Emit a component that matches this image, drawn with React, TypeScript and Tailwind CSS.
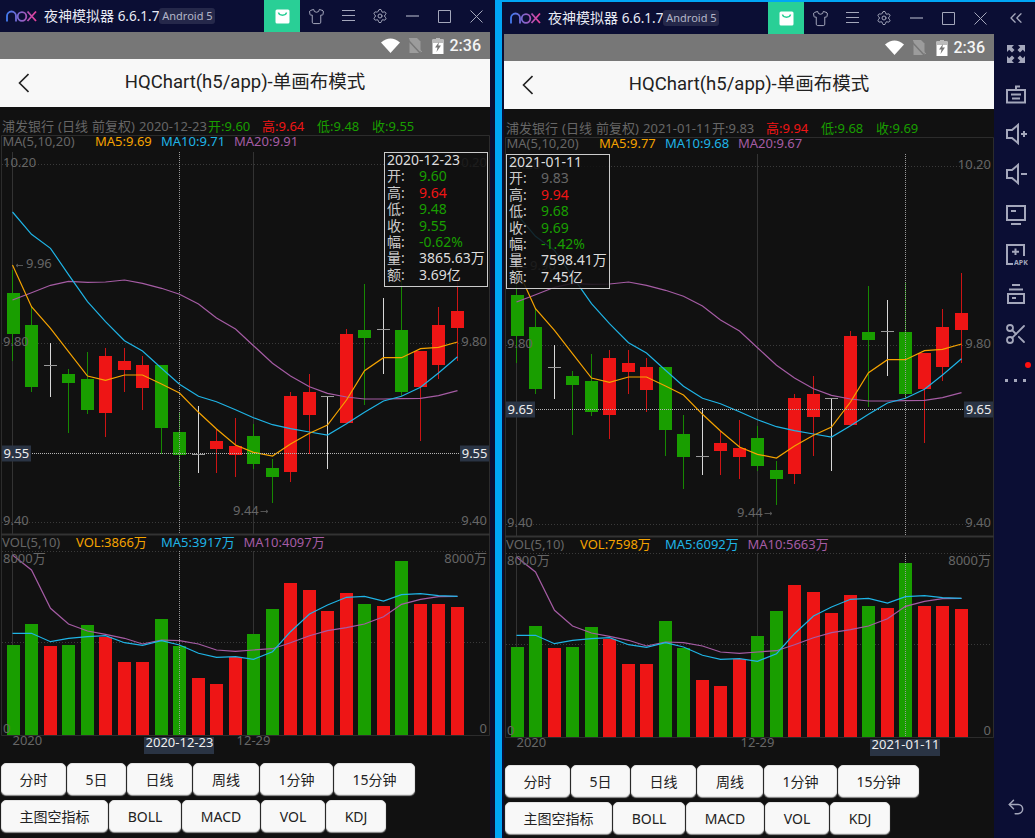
import { ChevronsLeft, Scissors, Settings, Shirt, Undo2 } from "lucide-react";

// all chart numbers below were read off the 3x crops: y = 280 + v / 3
const lefts = [7, 25, 44, 62, 81, 99, 118, 136, 155, 173, 192, 210, 229, 247, 266, 284, 303, 321, 340, 358, 377, 395, 414, 432, 451];
const RED = "#ee1515";
const GREEN = "#199e00";
const LABEL = "#666666";

// [type, wick top, body top, body bottom, wick bottom]
const candles: [string, number, number, number, number][] = [
  ["g", -30, 40, 162, 243],
  ["g", 80, 135, 322, 335],
  ["w", 190, 255, 255, 350],
  ["g", 267, 282, 308, 458],
  ["g", 216, 297, 389, 402],
  ["r", 203, 228, 400, 470],
  ["r", 203, 243, 269, 335],
  ["r", 228, 256, 325, 389],
  ["g", 256, 256, 443, 522],
  ["g", 398, 456, 525, 622],
  ["w", 377, 522, 522, 578],
  ["r", 448, 483, 508, 578],
  ["r", 415, 499, 525, 590],
  ["g", 432, 468, 551, 566],
  ["g", 537, 564, 590, 670],
  ["r", 337, 348, 577, 605],
  ["r", 282, 336, 404, 522],
  ["w", 349, 349, 349, 566],
  ["r", 148, 162, 429, 429],
  ["g", 12, 149, 174, 375],
  ["w", 55, 146, 146, 282],
  ["g", 0, 149, 335, 348],
  ["r", 213, 213, 321, 483],
  ["r", 82, 135, 256, 296],
  ["r", -27, 93, 145, 242],
];

const ma5 = [-45, 80, 145, 215, 288, 301, 285, 285, 312, 339, 397, 447, 495, 517, 528, 492, 460, 435, 360, 272, 233, 233, 206, 202, 186];
const ma10 = [-204, -137, -95, -16, 65, 125, 182, 213, 265, 313, 349, 365, 389, 413, 434, 446, 456, 465, 431, 397, 363, 349, 322, 279, 230];
const ma20 = [60, 38, 16, 4, 7, 6, 0, 10, 25, 43, 72, 114, 147, 197, 250, 288, 320, 340, 351, 357, 357, 356, 355, 347, 332];

// volume panel: y = 550 + v / 3
const volumes: [string, number][] = [
  ["g", 284], ["g", 222], ["r", 287], ["g", 284], ["g", 225], ["r", 260], ["r", 336], ["r", 336], ["g", 208], ["g", 287],
  ["r", 384], ["r", 402], ["r", 322], ["g", 251], ["g", 176], ["r", 100], ["r", 120], ["r", 183], ["r", 129], ["g", 162],
  ["r", 169], ["g", 33], ["r", 162], ["r", 162], ["r", 172],
];
const volMa5 = [250, 250, 275, 265, 260, 257, 278, 286, 272, 285, 310, 322, 320, 328, 305, 245, 192, 165, 142, 139, 153, 134, 131, 137, 139];
const volMa10 = [15, 60, 175, 222, 243, 253, 265, 282, 270, 272, 282, 300, 304, 300, 296, 278, 257, 242, 233, 222, 200, 163, 148, 140, 139];

const line = (vals: number[], base: number) =>
  vals.map((v, i) => `${i === 0 ? 12.5 : lefts[i] + 6.5},${(base + v / 3).toFixed(1)}`).join(" ");

const candleColor = (t: string) => (t === "r" ? RED : t === "g" ? GREEN : "#d8d8d8");

type ChartProps = {
  crossX: number;
  crossY: number;
  price: string;
  date: string;
  vol: string;
  volMa5Text: string;
  volMa10Text: string;
  ma: string[];
};

const Chart = ({ crossX, crossY, price, date, vol, volMa5Text, volMa10Text, ma }: ChartProps) => (
  <svg className="block h-[625px] w-[490px]" viewBox="0 135 490 625" fontSize="13">
    {/* frame and grid */}
    <path d="M1.5 135.5H489.5V735.5H1.5Z" fill="none" stroke="#2c2c2c" />
    <path d="M1 534.5H490" stroke="#333" strokeWidth="2" />
    <path d="M12.5 152V534M253.5 152V534M12.5 551V735M253.5 551V735" stroke="#333" />
    <path d="M2 164.500H488M2 343.500H488M2 522.500H488M2 551.500H488M2 642.500H488" stroke="#3a3a3a" strokeDasharray="1 2" />

    {candles.map(([t, wt, bt, bb, wb], i) => {
      const color = candleColor(t);
      const top = Math.round(280 + bt / 3);
      const bottom = Math.round(280 + bb / 3);
      const wx = i === 0 ? 12 : lefts[i] + 6;
      return (
        <g key={i} shapeRendering="crispEdges">
          <rect x={wx} y={280 + wt / 3} width="1" height={(wb - wt) / 3} fill={color} opacity={t === "w" ? 1 : 0.85} />
          {t === "w" ? (
            <rect x={lefts[i]} y={top} width="13" height="1" fill="#9a9a9a" />
          ) : (
            <rect x={lefts[i]} y={top} width="13" height={bottom - top} fill={color} />
          )}
        </g>
      );
    })}

    {volumes.map(([t, top], i) => (
      <rect key={i} x={lefts[i]} y={Math.round(550 + top / 3)} width="13" height={735 - Math.round(550 + top / 3)} fill={t === "r" ? RED : GREEN} shapeRendering="crispEdges" />
    ))}

    <polyline points={line(ma20, 280)} fill="none" stroke="#a55ca4" strokeWidth="1.2" />
    <polyline points={line(ma10, 280)} fill="none" stroke="#1fb4e6" strokeWidth="1.2" />
    <polyline points={line(ma5, 280)} fill="none" stroke="#f5a300" strokeWidth="1.2" />
    <polyline points={line(volMa10, 550)} fill="none" stroke="#a55ca4" strokeWidth="1.2" />
    <polyline points={line(volMa5, 550)} fill="none" stroke="#1fb4e6" strokeWidth="1.2" />

    {/* legends */}
    <text x="2.5" y="146" fill={LABEL}>MA(5,10,20)</text>
    <text x="95" y="146" fill="#f5a300">{ma[0]}</text>
    <text x="161" y="146" fill="#1fb4e6">{ma[1]}</text>
    <text x="234" y="146" fill="#a55ca4">{ma[2]}</text>
    <text x="2" y="547" fill={LABEL}>VOL(5,10)</text>
    <text x="76" y="547" fill="#f5a300">{vol}</text>
    <text x="161" y="547" fill="#1fb4e6">{volMa5Text}</text>
    <text x="243.500" y="547" fill="#a55ca4">{volMa10Text}</text>

    {/* axis labels */}
    <g fill={LABEL}>
      <text x="3" y="167">10.20</text>
      <text x="3" y="346">9.80</text>
      <text x="3" y="525">9.40</text>
      <text x="3" y="563">8000万</text>
      <text x="3" y="733">0</text>
      <g textAnchor="end">
        <text x="487" y="167">10.20</text>
        <text x="487" y="346">9.80</text>
        <text x="487" y="525">9.40</text>
        <text x="487" y="563">8000万</text>
        <text x="487" y="733">0</text>
      </g>
      <text x="12.500" y="745">2020</text>
      <text x="253.500" y="745" textAnchor="middle">12-29</text>
      <text x="26" y="268">9.96</text>
      <text x="233" y="515">9.44</text>
      <path d="M16 265.500H23M16 265.500 18 264M16 265.500 18 267M260.500 511.500H268M268 511.500 266 510M268 511.500 266 513" stroke="#555555" fill="none" />
    </g>

    {/* crosshair */}
    <path d={`M${crossX} 152V534M${crossX} 551V735`} stroke="#9a9a9a" strokeDasharray="1 1" />
    <path d={`M2 ${crossY}H488`} stroke="#b5b5b5" strokeDasharray="1 1" />
    <rect x="2" y={crossY - 8} width="29" height="16" fill="#2a3444" />
    <rect x="460" y={crossY - 8} width="29" height="16" fill="#2a3444" />
    <text x="3.500" y={crossY + 4.5} fill="#eeeeee">{price}</text>
    <text x="487.500" y={crossY + 4.5} fill="#eeeeee" textAnchor="end">{price}</text>
    <rect x={crossX - 35.5} y="737" width="70" height="17" fill="#2a3444" />
    <text x={crossX} y="747" fill="#eeeeee" textAnchor="middle">{date}</text>
  </svg>
);

type Row = { label: string; value: string; color: string };

const Tooltip = ({ date, rows, place }: { date: string; rows: Row[]; place: string }) => (
  <div className={`absolute h-[135px] w-[104px] border border-[#cccccc] bg-[#111111]/85 pl-[2px] text-[14px] leading-[16.4px] text-[#dddddd] ${place}`}>
    <div className="-mt-px">{date}</div>
    {rows.map((r) => (
      <div key={r.label} className="grid grid-cols-[32px_1fr]">
        <span className="text-[#cccccc]">{r.label}</span>
        <span className={r.color}>{r.value}</span>
      </div>
    ))}
  </div>
);

const row1 = [
  { label: "分时", w: "w-[65px]" },
  { label: "5日", w: "w-[59px]" },
  { label: "日线", w: "w-[65px]" },
  { label: "周线", w: "w-[66px]" },
  { label: "1分钟", w: "w-[73px]" },
  { label: "15分钟", w: "w-[81px]" },
];
const row2 = [
  { label: "主图空指标", w: "w-[107px]" },
  { label: "BOLL", w: "w-[72px]" },
  { label: "MACD", w: "w-[78px]" },
  { label: "VOL", w: "w-[64px]" },
  { label: "KDJ", w: "w-[60px]" },
];

const ButtonRow = ({ items }: { items: { label: string; w: string }[] }) => (
  <div className="flex gap-px">
    {items.map((b) => (
      <button
        key={b.label}
        className={`h-[32px] rounded-[5px] border border-[#e4e4e4] bg-[#f8f8f8] text-[14px] text-[#222222] shadow-[0_1px_1px_#999999] ${b.w}`}
      >
        {b.label}
      </button>
    ))}
  </div>
);

const TitleBar = () => (
  <div className="flex h-8 w-[490px] shrink-0 items-center bg-[#0b0e34]">
    <div className="flex w-[264px] shrink-0 items-center">
      <svg className="ml-[6px] shrink-0" width="31" height="12" viewBox="0 0 31 12" fill="none" strokeWidth="1.8">
        <defs>
          <linearGradient id="noxLogo" x1="0" x2="31" y1="0" y2="0" gradientUnits="userSpaceOnUse">
            <stop offset="0" stopColor="#3d7bf0" />
            <stop offset="0.5" stopColor="#8b62c8" />
            <stop offset="1" stopColor="#ee3d96" />
          </linearGradient>
        </defs>
        <path d="M1 11.500V6a4.500 4.500 0 0 1 9 0v5.500" stroke="url(#noxLogo)" />
        <circle cx="16" cy="6.500" r="4.300" stroke="url(#noxLogo)" />
        <path d="M21.500 1.500 30 11M30 1.500 21.500 11" stroke="url(#noxLogo)" />
      </svg>
      <span className="ml-[7px] whitespace-nowrap text-[14px] text-[#e8eaf4]">
        夜神模拟器 <span className="text-[13.5px]">6.6.1.7</span>
      </span>
      <span className="w-[56px] whitespace-nowrap rounded-[3px] bg-[#25284a] py-px text-center text-[11px] leading-[14px] text-[#b4b6c8]">Android 5</span>
    </div>
    <div className="flex h-8 w-9 shrink-0 items-center justify-center bg-[#29cf96]">
      <svg width="15" height="15" viewBox="0 0 15 15">
        <rect x="0.5" y="0.5" width="14" height="14" rx="1.500" fill="#ffffff" />
        <path d="M3.500 3.500c.6 3.600 7.400 3.600 8 0" fill="none" stroke="#29cf96" strokeWidth="1.500" />
      </svg>
    </div>
    <div className="flex h-8 w-8 shrink-0 items-center justify-center text-[#a4a7bb]">
      <Shirt size={17} strokeWidth={1.4} />
    </div>
    <div className="flex h-8 w-8 shrink-0 items-center justify-center text-[#a4a7bb]">
      <svg width="13" height="12" viewBox="0 0 13 12" stroke="currentColor"><path d="M0 .5H13M0 5.500H13M0 10.500H13" /></svg>
    </div>
    <div className="flex h-8 w-8 shrink-0 items-center justify-center text-[#a4a7bb]">
      <Settings size={16} strokeWidth={1.5} />
    </div>
    <div className="flex h-8 w-8 shrink-0 items-center justify-center text-[#a4a7bb]">
      <svg width="13" height="2" viewBox="0 0 13 2" stroke="currentColor"><path d="M0 1H13" strokeWidth="1.200" /></svg>
    </div>
    <div className="flex h-8 w-8 shrink-0 items-center justify-center text-[#a4a7bb]">
      <svg width="13" height="13" viewBox="0 0 13 13" fill="none" stroke="currentColor"><path d="M.5.5H12.500V12.500H.5Z" /></svg>
    </div>
    <div className="flex h-8 w-8 shrink-0 items-center justify-center text-[#a4a7bb]">
      <svg width="13" height="13" viewBox="0 0 13 13" fill="none" stroke="currentColor"><path d="M.5.5 12.500 12.500M12.500.5 .5 12.500" /></svg>
    </div>
  </div>
);

const StatusBar = () => (
  <div className="flex h-[27px] shrink-0 items-center justify-end bg-[#777777]">
    <svg className="mr-[8px]" width="19" height="15" viewBox="0 0 19 15"><path d="M0 4.500Q9.500-3.500 19 4.500L9.500 15Z" fill="#ffffff" /></svg>
    <svg className="mr-[10px]" width="14" height="16" viewBox="0 0 14 16">
      <path d="M1.500 0H9L12.500 3.500V15H1.500Z" fill="#9c9c9c" />
      <path d="M0 2 13 16" stroke="#777777" strokeWidth="1.500" />
      <path d="M1 0 14 14" stroke="#9c9c9c" />
    </svg>
    <svg className="mr-[6px]" width="12" height="16" viewBox="0 0 12 16">
      <path d="M4 0H8V1.500H11.500V16H.5V1.500H4Z" fill="#ffffff" />
      <path d="M4 0H8V1.500H11.500V5H.5V1.500H4Z" fill="#bbbbbb" />
      <path d="M7 4 3 9.500H5.500L4.500 14 9 7.500H6.300Z" fill="#777777" />
    </svg>
    <span className="mr-[9px] font-['Roboto','Noto_Sans',sans-serif] text-[16px] font-medium text-[#f4f4f4]">2:36</span>
  </div>
);

const AppHeader = () => (
  <div className="flex h-[48px] shrink-0 items-center bg-[#f8f8f8]">
    <div className="flex w-[60px] justify-start pl-[18px]">
      <svg width="11" height="20" viewBox="0 0 11 20" fill="none" stroke="#222222" strokeWidth="1.600"><path d="M10.500 1 1.500 10 10.500 19" /></svg>
    </div>
    <div className="flex-1 text-center font-['Roboto','Noto_Sans_CJK_SC',sans-serif] text-[18.5px] text-[#222222]">HQChart(h5/app)-单画布模式</div>
    <div className="w-[60px]" />
  </div>
);

type WindowProps = ChartProps & {
  open: string;
  openColor: string;
  high: string;
  low: string;
  close: string;
  tooltipPlace: string;
  rows: Row[];
};

const EmulatorWindow = ({ open, openColor, high, low, close, tooltipPlace, rows, ...chart }: WindowProps) => (
  <div className="flex w-[490px] shrink-0 flex-col">
    <TitleBar />
    <StatusBar />
    <AppHeader />
    <div className="flex-1 bg-[#111111]">
      <div className="flex h-[28px] items-end pl-[2px] text-[13px] leading-[18px]">
        <span className="w-[206px] whitespace-nowrap text-[#666666] [word-spacing:0.7px]">浦发银行 (日线 前复权) {chart.date}</span>
        <span className={`w-[54px] ${openColor}`}>{open}</span>
        <span className="w-[55px] text-[#ee1515]">{high}</span>
        <span className="w-[55px] text-[#199e00]">{low}</span>
        <span className="text-[#199e00]">{close}</span>
      </div>
      <div className="relative">
        <Chart {...chart} />
        <Tooltip date={chart.date} rows={rows} place={tooltipPlace} />
      </div>
      <div className="mt-[3px] flex flex-col gap-[5px] pl-px">
        <ButtonRow items={row1} />
        <ButtonRow items={row2} />
      </div>
    </div>
  </div>
);

const SideBar = () => (
  <div className="flex w-[41px] shrink-0 flex-col items-center text-[#a4a7bb]">
    <div className="flex h-8 items-center pl-[3px]">
      <ChevronsLeft size={20} strokeWidth={1.6} />
    </div>
    <div className="mt-[8px] flex flex-col items-center gap-[16px] pl-[3px]">
      {/* expand */}
      <svg width="24" height="24" viewBox="0 0 24 24" fill="currentColor">
        <path d="M3 3H10L7.800 5.200 10.500 8 8 10.500 5.200 7.800 3 10ZM21 3H14L16.200 5.200 13.500 8 16 10.500 18.800 7.800 21 10ZM3 21H10L7.800 18.800 10.500 16 8 13.500 5.200 16.200 3 14ZM21 21H14L16.200 18.800 13.500 16 16 13.500 18.800 16.200 21 14Z" />
      </svg>
      {/* keyboard */}
      <svg width="24" height="24" viewBox="0 0 24 24" fill="none" stroke="currentColor" strokeWidth="2">
        <path d="M3 8H21V20.500H3ZM12 8V4.500H16M7 12.500H17M8 16.500H16" />
      </svg>
      {/* volume up */}
      <svg width="24" height="24" viewBox="0 0 24 24" fill="none" stroke="currentColor" strokeWidth="2">
        <path d="M3 8H8L14 3V21L8 16H3ZM17 12H23M20 9V15" />
      </svg>
      {/* volume down */}
      <svg width="24" height="24" viewBox="0 0 24 24" fill="none" stroke="currentColor" strokeWidth="2">
        <path d="M3 8H8L14 3V21L8 16H3ZM17 12H23" />
      </svg>
      {/* screen */}
      <svg width="24" height="24" viewBox="0 0 24 24" fill="none" stroke="currentColor" strokeWidth="2">
        <path d="M3 4H21V18H3ZM7 22H17M7 9H12" />
      </svg>
      {/* apk */}
      <svg width="24" height="24" viewBox="0 0 24 24" fill="none" stroke="currentColor" strokeWidth="2">
        <path d="M20 14V3H3V22H9M11.500 6.500V13M8 9.700H15" />
        <text x="10" y="23" fill="currentColor" stroke="none" fontSize="7" fontWeight="700">APK</text>
      </svg>
      {/* multi window */}
      <svg width="24" height="24" viewBox="0 0 24 24" fill="none" stroke="currentColor" strokeWidth="2">
        <path d="M8 3H16M5 7.500H19M4 12H20V21H4ZM8 16H12" />
      </svg>
      <Scissors size={24} strokeWidth={1.8} />
      {/* more */}
      <div className="relative flex h-6 w-6 items-end gap-[6px] pb-[4px] pl-[1px]">
        <span className="h-[3px] w-[3px] bg-current" />
        <span className="h-[3px] w-[3px] bg-current" />
        <span className="h-[3px] w-[3px] bg-current" />
        <span className="absolute right-[-3px] top-0 h-[6px] w-[6px] rounded-full bg-[#ff0f0f]" />
      </div>
    </div>
    <div className="mt-auto mb-[21px] pl-[3px]">
      <Undo2 size={20} strokeWidth={1.8} />
    </div>
  </div>
);

const leftRows: Row[] = [
  { label: "开:", value: "9.60", color: "text-[#199e00]" },
  { label: "高:", value: "9.64", color: "text-[#ee1515]" },
  { label: "低:", value: "9.48", color: "text-[#199e00]" },
  { label: "收:", value: "9.55", color: "text-[#199e00]" },
  { label: "幅:", value: "-0.62%", color: "text-[#199e00]" },
  { label: "量:", value: "3865.63万", color: "text-[#dddddd]" },
  { label: "额:", value: "3.69亿", color: "text-[#dddddd]" },
];

const rightRows: Row[] = [
  { label: "开:", value: "9.83", color: "text-[#666666]" },
  { label: "高:", value: "9.94", color: "text-[#ee1515]" },
  { label: "低:", value: "9.68", color: "text-[#199e00]" },
  { label: "收:", value: "9.69", color: "text-[#199e00]" },
  { label: "幅:", value: "-1.42%", color: "text-[#199e00]" },
  { label: "量:", value: "7598.41万", color: "text-[#dddddd]" },
  { label: "额:", value: "7.45亿", color: "text-[#dddddd]" },
];

export default function App() {
  return (
    <div className="flex h-[838px] w-[1035px] overflow-hidden bg-[#0b0e34] font-['Noto_Sans','Noto_Sans_CJK_SC',sans-serif]">
      <EmulatorWindow
        crossX={179.5}
        crossY={453.5}
        price="9.55"
        date="2020-12-23"
        vol="VOL:3866万"
        volMa5Text="MA5:3917万"
        volMa10Text="MA10:4097万"
        ma={["MA5:9.69", "MA10:9.71", "MA20:9.91"]}
        open="开:9.60"
        openColor="text-[#199e00]"
        high="高:9.64"
        low="低:9.48"
        close="收:9.55"
        tooltipPlace="left-[384px] top-[17px]"
        rows={leftRows}
      />
      <div className="w-[5px] shrink-0" />
      <div className="flex h-[838px] flex-1 border-l-[7px] border-t-2 border-[#00a6f6] pl-[2px]">
        <EmulatorWindow
          crossX={401.5}
          crossY={407.5}
          price="9.65"
          date="2021-01-11"
          vol="VOL:7598万"
          volMa5Text="MA5:6092万"
          volMa10Text="MA10:5663万"
          ma={["MA5:9.77", "MA10:9.68", "MA20:9.67"]}
          open="开:9.83"
          openColor="text-[#666666]"
          high="高:9.94"
          low="低:9.68"
          close="收:9.69"
          tooltipPlace="left-[2px] top-[17px]"
          rows={rightRows}
        />
        <SideBar />
      </div>
    </div>
  );
}
